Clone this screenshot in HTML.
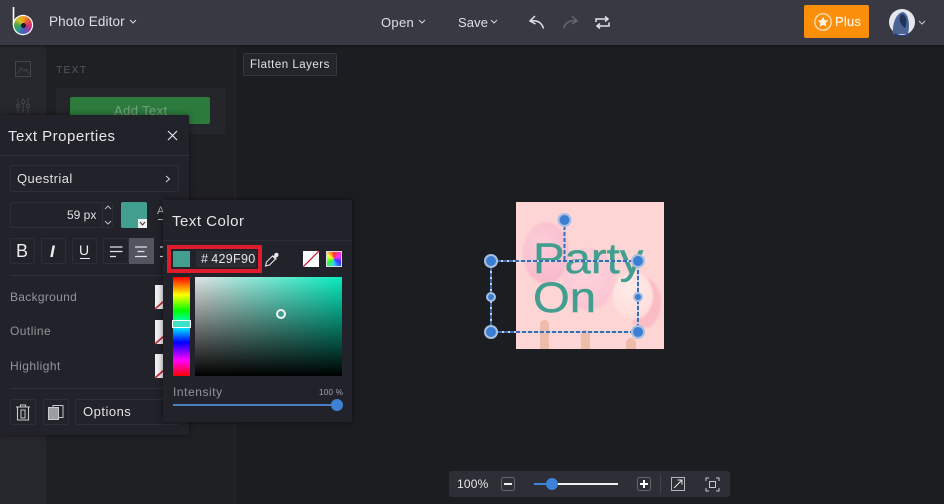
<!DOCTYPE html>
<html><head><meta charset="utf-8">
<style>
*{box-sizing:border-box}
html,body{margin:0;padding:0}
body{width:944px;height:504px;overflow:hidden;background:#1c1d21;position:relative;font-family:"Liberation Sans",sans-serif;color:#e4e4e8}
.a{position:absolute}
.t{position:absolute;white-space:nowrap;line-height:1}
.box{position:absolute;border:1px solid #2d2e36;border-radius:2px}
svg{position:absolute;overflow:visible}
</style></head><body>

<div class="a" style="left:0;top:44px;width:46px;height:460px;background:#26272c"></div>
<div class="a" style="left:46px;top:44px;width:189px;height:460px;background:#1f2024"></div>
<div class="a" style="left:235px;top:44px;width:1px;height:460px;background:#26272b"></div>

<div class="a" style="left:0;top:0;width:944px;height:45px;background:#383943;box-shadow:0 1px 2px #17181b"></div>

<!-- logo -->
<svg style="left:0;top:0" width="40" height="40" viewBox="0 0 40 40">
<path d="M13.500 7V25" stroke="#fff" stroke-width="1.6" fill="none"/>
<circle cx="23" cy="25" r="10.200" fill="#fff"/>
</svg>
<div class="a" style="left:14px;top:16px;width:18px;height:18px;border-radius:50%;background:conic-gradient(#f0a41c,#e8602a,#d6336c,#8a3fa8,#3f63c4,#2f9a8e,#4aa84a,#c9c52c,#f0a41c)"></div>
<div class="a" style="left:20.500px;top:22.500px;width:5px;height:5px;border-radius:50%;background:#1d1d22"></div>
<div class="t" style="left:49px;top:15px;font-size:13.5px;letter-spacing:.12px;color:#dfe0e4">Photo Editor</div>
<svg style="left:129px;top:19px" width="8" height="6"><path d="M1 1L4 4L7 1" stroke="#d8d8dc" fill="none" stroke-width="1"/></svg>

<div class="t" style="left:381px;top:16px;font-size:13px;letter-spacing:.3px;color:#dfe0e4">Open</div>
<svg style="left:418px;top:19px" width="8" height="6"><path d="M1 1L4 4L7 1" stroke="#d8d8dc" fill="none" stroke-width="1"/></svg>
<div class="t" style="left:458px;top:16px;font-size:13px;letter-spacing:.1px;color:#dfe0e4">Save</div>
<svg style="left:490px;top:19px" width="8" height="6"><path d="M1 1L4 4L7 1" stroke="#d8d8dc" fill="none" stroke-width="1"/></svg>

<svg style="left:528px;top:14px" width="18" height="16" viewBox="0 0 18 16"><path d="M7 2L2 7L7.500 10M2.500 7C9 6 13.500 8 15.500 14.500" stroke="#e2e2e6" stroke-width="1.500" fill="none"/></svg>
<svg style="left:561px;top:14px" width="18" height="16" viewBox="0 0 18 16"><path d="M11 2L16 7L11 10M15.500 7C9 6 4.500 8 2.500 14.500" stroke="#65666e" stroke-width="1.500" fill="none"/></svg>
<svg style="left:595px;top:15px" width="15" height="15" viewBox="0 0 15 15"><path d="M1 7V4H12.500M10 1.500L13 4L10 6.500M14 7.500V11H2.500M5 8.500L2 11L5 13.500" stroke="#e2e2e6" stroke-width="1.500" fill="none"/></svg>

<div class="a" style="left:804px;top:5px;width:65px;height:33px;background:#fb8f0c;border-radius:2px"></div>
<svg style="left:813px;top:12px" width="20" height="20" viewBox="0 0 20 20"><circle cx="10" cy="10" r="8.200" fill="none" stroke="#fbd9a5" stroke-width="1.500"/><path d="M10 4.600L11.600 8.100L15.400 8.500L12.600 11L13.400 14.800L10 12.900L6.600 14.800L7.400 11L4.600 8.500L8.400 8.100Z" fill="#fff3e0"/></svg>
<div class="t" style="left:835px;top:15px;font-size:13px;letter-spacing:.2px;color:#fff3e0;-webkit-text-stroke:.2px #fff3e0">Plus</div>

<svg style="left:888px;top:9px" width="28" height="27" viewBox="0 0 28 27"><circle cx="14" cy="13" r="13" fill="#e6e7ec"/><path d="M5 25C4 15 8 4 15 3C21 5 22 16 20 25Z" fill="#4a6595"/><path d="M13 5C18 5 20 12 17 19C12 16 10 10 13 5Z" fill="#23345a"/><path d="M6 24Q14 28 22 24L20 27H8Z" fill="#1d3f84"/></svg>
<svg style="left:918px;top:20px" width="8" height="6"><path d="M1 1L4 4L7 1" stroke="#c9cad0" fill="none" stroke-width="1"/></svg>

<!-- sidebar dim -->
<svg style="left:15px;top:61px" width="17" height="17" viewBox="0 0 17 17"><rect x=".5" y=".5" width="15" height="15" fill="none" stroke="#44454b"/><path d="M2 13L6 7L9 10L11 8L14 13" fill="none" stroke="#44454b"/></svg>
<svg style="left:15px;top:97px" width="17" height="18" viewBox="0 0 17 18"><path d="M3 1V16M8 1V16M13 1V16" stroke="#44454b"/><circle cx="3" cy="9" r="1.700" fill="#26272c" stroke="#44454b"/><circle cx="8" cy="5" r="1.700" fill="#26272c" stroke="#44454b"/><circle cx="13" cy="9" r="1.700" fill="#26272c" stroke="#44454b"/></svg>
<div class="t" style="left:56px;top:65px;font-size:10.5px;letter-spacing:1.1px;color:#55565c">TEXT</div>
<div class="a" style="left:56px;top:88px;width:169px;height:46px;background:#25262b"></div>
<div class="a" style="left:70px;top:97px;width:140px;height:27px;background:#2c7b3d;border-radius:2px"></div>
<div class="t" style="left:114px;top:104px;font-size:13px;letter-spacing:.4px;color:#74a27f">Add Text</div>

<div class="a" style="left:243px;top:53px;width:94px;height:23px;background:#24252b;border:1px solid #36373e;border-radius:2px"></div>
<div class="t" style="left:250px;top:59px;font-size:11.5px;letter-spacing:.5px;color:#e0e0e4;line-height:12px">Flatten Layers</div>

<!-- text properties -->
<div class="a" style="left:0;top:115px;width:189px;height:320px;background:#21222a;box-shadow:0 0 6px rgba(0,0,0,.45)"></div>
<div class="t" style="left:8px;top:129px;font-size:15px;letter-spacing:.5px;color:#e6e6ea">Text Properties</div>
<svg style="left:167px;top:130px" width="11" height="11"><path d="M1 1L10 10M10 1L1 10" stroke="#e6e6ea" stroke-width="1.200"/></svg>
<div class="a" style="left:0;top:155px;width:189px;height:1px;background:#2e2f37"></div>
<div class="box" style="left:10px;top:165px;width:169px;height:27px"></div>
<div class="t" style="left:17px;top:172px;font-size:13px;letter-spacing:.4px;color:#e0e0e4">Questrial</div>
<svg style="left:165px;top:175px" width="6" height="8"><path d="M1 1L4.500 4L1 7" stroke="#d8d8dc" fill="none"/></svg>

<div class="box" style="left:10px;top:202px;width:103px;height:26px"></div>
<div class="a" style="left:102px;top:203px;width:1px;height:24px;background:#2d2e36"></div>
<div class="t" style="left:67px;top:209px;font-size:12px;letter-spacing:0;color:#dfe0e4">59 px</div>
<svg style="left:104px;top:204px" width="8" height="22"><path d="M1 5L4 2L7 5M1 17L4 20L7 17" stroke="#b8b9bf" fill="none"/></svg>
<div class="a" style="left:121px;top:202px;width:26px;height:26px;background:#429f90;border-radius:2px"></div>
<div class="a" style="left:138px;top:219px;width:9px;height:9px;background:#f0f0f0"></div>
<svg style="left:139px;top:221px" width="7" height="5"><path d="M1 1L3.500 4L6 1" stroke="#333" fill="none"/></svg>
<div class="t" style="left:157px;top:206px;font-size:11px;color:#b5b6bb">A</div>
<div class="a" style="left:158px;top:219px;width:6px;height:1px;background:#b5b6bb"></div>

<div class="box" style="left:10px;top:238px;width:25px;height:26px"></div>
<div class="t" style="left:16px;top:242px;font-size:18px;color:#ececf0">B</div>
<div class="box" style="left:41px;top:238px;width:25px;height:26px"></div>
<div class="t" style="left:50px;top:243px;font-size:17px;font-weight:bold;font-style:italic;color:#ececf0">I</div>
<div class="box" style="left:72px;top:238px;width:25px;height:26px"></div>
<div class="t" style="left:79px;top:243px;font-size:14px;color:#ececf0">U</div>
<div class="a" style="left:80px;top:258px;width:10px;height:1px;background:#ececf0"></div>
<div class="box" style="left:103px;top:238px;width:26px;height:26px"></div>
<svg style="left:110px;top:246px" width="13" height="12"><path d="M0 1H12.500M0 5.500H12.500M0 10.500H6" stroke="#e2e2e6" stroke-width="1.200"/></svg>
<div class="a" style="left:129px;top:238px;width:25px;height:26px;background:#53545f"></div>
<svg style="left:135px;top:246px" width="13" height="12"><path d="M0 1H12M2.500 5.500H9.500M0 10.500H12" stroke="#e2e2e6" stroke-width="1.200"/></svg>
<svg style="left:160px;top:246px" width="6" height="12"><path d="M0 1H6M0 10.500H6" stroke="#e2e2e6" stroke-width="1.200"/></svg>

<div class="a" style="left:10px;top:275px;width:170px;height:1px;background:#2e2f37"></div>
<div class="t" style="left:10px;top:291px;font-size:12px;letter-spacing:.3px;color:#94959b">Background</div>
<div class="t" style="left:10px;top:325px;font-size:12px;letter-spacing:.45px;color:#94959b">Outline</div>
<div class="t" style="left:10px;top:360px;font-size:12px;letter-spacing:.45px;color:#94959b">Highlight</div>
<svg style="left:155px;top:285px" width="9" height="24"><rect width="9" height="24" fill="#f1f1f1"/><path d="M0 24L9 16" stroke="#c22a3e" stroke-width="1.800"/></svg>
<svg style="left:155px;top:320px" width="9" height="24"><rect width="9" height="24" fill="#f1f1f1"/><path d="M0 24L9 16" stroke="#c22a3e" stroke-width="1.800"/></svg>
<svg style="left:155px;top:354px" width="9" height="24"><rect width="9" height="24" fill="#f1f1f1"/><path d="M0 24L9 16" stroke="#c22a3e" stroke-width="1.800"/></svg>
<div class="a" style="left:10px;top:388px;width:170px;height:1px;background:#2e2f37"></div>

<div class="box" style="left:10px;top:399px;width:26px;height:26px"></div>
<svg style="left:15px;top:404px" width="16" height="17" viewBox="0 0 16 17"><path d="M1 3H15M5.500 3V1H10.500V3M2.500 3V16H13.500V3" stroke="#c8c9ce" fill="none" stroke-width="1.100"/><rect x="6" y="6" width="4" height="8" fill="none" stroke="#c8c9ce"/></svg>
<div class="box" style="left:43px;top:399px;width:26px;height:26px"></div>
<svg style="left:48px;top:405px" width="16" height="15" viewBox="0 0 16 15"><rect x="5" y=".5" width="10" height="12" fill="none" stroke="#c8c9ce"/><rect x=".5" y="2.500" width="10" height="12" fill="#9c9da3" stroke="#c8c9ce"/></svg>
<div class="box" style="left:75px;top:399px;width:104px;height:26px"></div>
<div class="t" style="left:83px;top:405px;font-size:13px;letter-spacing:.5px;color:#e4e4e8">Options</div>

<!-- text color -->
<div class="a" style="left:163px;top:200px;width:189px;height:222px;background:#21222a;box-shadow:0 0 6px rgba(0,0,0,.5)"></div>
<div class="t" style="left:172px;top:214px;font-size:15px;letter-spacing:.5px;color:#e6e6ea">Text Color</div>
<div class="a" style="left:163px;top:240px;width:189px;height:1px;background:#2b2c34"></div>
<div class="a" style="left:167px;top:245px;width:95px;height:28px;border:4px solid #de1c2c"></div>
<div class="a" style="left:173px;top:251px;width:17px;height:16px;background:#429f90"></div>
<div class="a" style="left:196px;top:251px;width:60px;height:16px;background:#2a2b33"></div>
<div class="t" style="left:201px;top:253px;font-size:12.5px;letter-spacing:.3px;color:#e6e6ea">#<span style="margin-left:3px">429F90</span></div>
<svg style="left:264px;top:252px" width="15" height="15" viewBox="0 0 15 15"><path d="M1.500 14L2.500 10L8.500 4L11.500 7L5.500 13Z" fill="none" stroke="#e6e6ea" stroke-width="1.100"/><path d="M7.500 3L10 4L10.500 1.800Q12 0 13.800 1.200T13.500 5L12 5.500L13 8Z" fill="#e6e6ea"/></svg>
<svg style="left:303px;top:251px" width="16" height="16"><rect width="16" height="16" fill="#fff"/><path d="M0 16L16 0" stroke="#c22a3e" stroke-width="1.300"/></svg>
<div class="a" style="left:326px;top:251px;width:16px;height:16px;border:1px solid #ddd;background:conic-gradient(#f33,#f3f,#33f,#3cf,#3f3,#ff3,#f33)"></div>

<div class="a" style="left:173px;top:277px;width:17px;height:99px;background:linear-gradient(#f00 0%,#ff0 18%,#0f0 34%,#0ff 50%,#00f 66%,#f0f 84%,#f00 100%)"></div>
<div class="a" style="left:172px;top:320px;width:19px;height:8px;background:#3fe0c8;border:1.500px solid #fff"></div>
<div class="a" style="left:195px;top:277px;width:147px;height:99px;background:linear-gradient(to bottom,rgba(0,0,0,0),#000),linear-gradient(to right,#e2e4e4,#08ecc0)"></div>
<div class="a" style="left:276px;top:309px;width:10px;height:10px;border-radius:50%;background:#429f90;border:2px solid #f2f2f2"></div>

<div class="t" style="left:173px;top:386px;font-size:12px;letter-spacing:.55px;color:#94959b">Intensity</div>
<div class="t" style="left:319px;top:389px;font-size:8px;letter-spacing:.3px;color:#a5a6ac">100 %</div>
<div class="a" style="left:173px;top:404px;width:164px;height:2px;background:#4a7fc4"></div>
<div class="a" style="left:331px;top:399px;width:12px;height:12px;border-radius:50%;background:#3d81d6"></div>

<!-- image -->
<div class="a" style="left:516px;top:202px;width:148px;height:147px;background:#fed5d5;overflow:hidden">
<div class="a" style="left:7px;top:20px;width:46px;height:62px;border-radius:50%;background:radial-gradient(circle at 40% 35%,#fccdd8,#f8b4c7);filter:blur(1px)"></div>
<div class="a" style="left:47px;top:46px;width:52px;height:62px;border-radius:50%;background:radial-gradient(circle at 45% 40%,#fdd3dc,#fac0cf);filter:blur(1px)"></div>
<div class="a" style="left:111px;top:76px;width:34px;height:50px;border-radius:50%;background:#fbbcc4;filter:blur(1px)"></div>
<div class="a" style="left:97px;top:70px;width:40px;height:48px;border-radius:50%;background:radial-gradient(circle at 45% 35%,#ffebe8,#fed9d8);filter:blur(1px)"></div>
<div class="a" style="left:24px;top:118px;width:9px;height:29px;background:#eebcaa;border-radius:5px 5px 0 0"></div>
<div class="a" style="left:65px;top:128px;width:9px;height:19px;background:#eebcaa;border-radius:5px 5px 0 0"></div>
<div class="a" style="left:110px;top:136px;width:10px;height:11px;background:#eebcaa;border-radius:5px 5px 0 0"></div>
<div class="t" style="left:17px;top:38px;font-size:43px;letter-spacing:0;color:#429f90;line-height:39px;transform:scaleX(1.1);transform-origin:0 0;-webkit-text-stroke:.4px #429f90">Party<br>On</div>
</div>

<!-- selection -->
<svg style="left:0;top:0" width="944" height="504">
<g fill="none" stroke="#c5d3e6" stroke-width="2">
<path d="M491 261H638V332H491Z"/>
<path d="M564.500 220V261"/>
</g>
<g fill="none" stroke="#3a6cb4" stroke-width="2" stroke-dasharray="4 2">
<path d="M491 261H638V332H491Z"/>
<path d="M564.500 220V261"/>
</g>
<g fill="#3b7fd4" stroke="#a8bfdf" stroke-width="2">
<circle cx="564.500" cy="220" r="6"/>
<circle cx="491" cy="261" r="6"/>
<circle cx="638" cy="261" r="6"/>
<circle cx="491" cy="332" r="6"/>
<circle cx="638" cy="332" r="6"/>
<circle cx="491" cy="297" r="4"/>
<circle cx="638" cy="297" r="4"/>
</g>
</svg>

<!-- zoom -->
<div class="a" style="left:449px;top:471px;width:281px;height:26px;background:#2e2f36;border-radius:3px"></div>
<div class="t" style="left:457px;top:478px;font-size:12px;letter-spacing:.2px;color:#e6e6ea">100%</div>
<svg style="left:501px;top:477px" width="14" height="14"><rect x=".5" y=".5" width="13" height="13" rx="2" fill="none" stroke="#66676e"/><path d="M3 7H11" stroke="#eee" stroke-width="2"/></svg>
<div class="a" style="left:534px;top:483px;width:18px;height:2px;background:#3d81d6"></div>
<div class="a" style="left:552px;top:483px;width:66px;height:2px;background:#f0f0f2"></div>
<div class="a" style="left:546px;top:478px;width:12px;height:12px;border-radius:50%;background:#3d81d6"></div>
<svg style="left:637px;top:477px" width="14" height="14"><rect x=".5" y=".5" width="13" height="13" rx="2" fill="none" stroke="#66676e"/><path d="M3 7H11M7 3V11" stroke="#fff" stroke-width="2"/></svg>
<div class="a" style="left:660px;top:475px;width:1px;height:18px;background:#44454c"></div>
<svg style="left:671px;top:477px" width="14" height="14"><rect x=".5" y=".5" width="13" height="13" fill="none" stroke="#b5b6bb"/><path d="M3 11L11 3M6.500 3H11V7.500" stroke="#e6e6ea" fill="none"/></svg>
<svg style="left:705px;top:477px" width="15" height="15"><path d="M1 4V1H4M11 1H14V4M14 11V14H11M4 14H1V11" stroke="#c8c9ce" fill="none"/><rect x="4.500" y="4.500" width="6" height="6" fill="none" stroke="#c8c9ce"/></svg>
</body></html>
